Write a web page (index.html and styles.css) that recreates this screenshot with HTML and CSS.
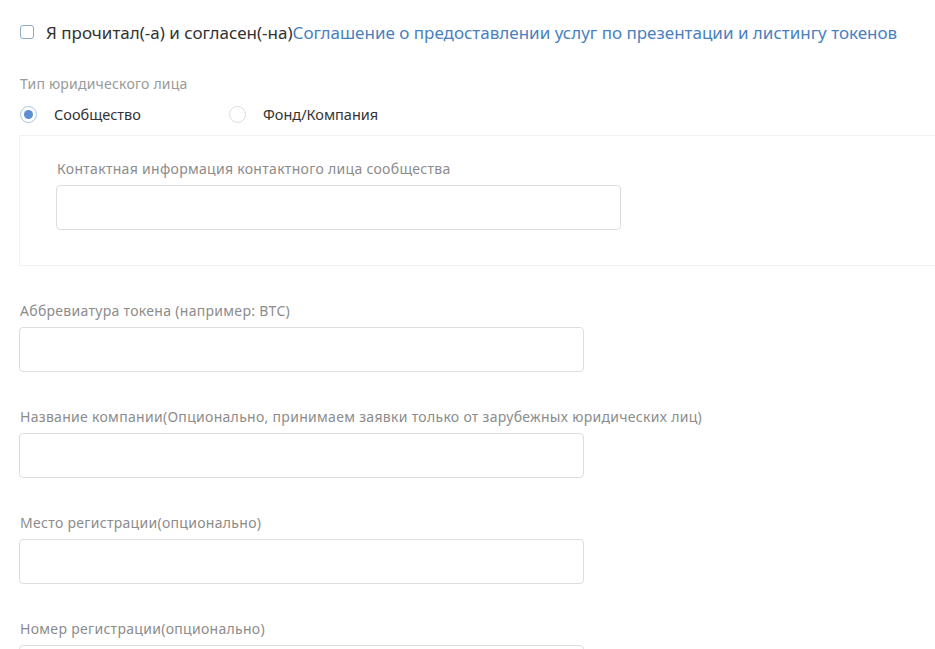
FILE: index.html
```html
<!DOCTYPE html>
<html lang="ru">
<head>
<meta charset="utf-8">
<link rel="stylesheet" href="styles.css">
</head>
<body>
<div class="page">
  <div class="agree">
    <span class="checkbox"></span>
    <span class="agree-text">Я прочитал(-а) и согласен(-на)<a class="link">Соглашение о предоставлении услуг по презентации и листингу токенов</a></span>
  </div>

  <div class="type-label">Тип юридического лица</div>
  <div class="radios">
    <div class="radio-item">
      <span class="radio checked"></span>
      <span class="radio-text">Сообщество</span>
    </div>
    <div class="radio-item">
      <span class="radio"></span>
      <span class="radio-text">Фонд/Компания</span>
    </div>
  </div>

  <div class="panel">
    <div class="field inner">
      <div class="label">Контактная информация контактного лица сообщества</div>
      <div class="input"></div>
    </div>
  </div>

  <div class="field">
    <div class="label">Аббревиатура токена (например: BTC)</div>
    <div class="input"></div>
  </div>
  <div class="field">
    <div class="label">Название компании(Опционально, принимаем заявки только от зарубежных юридических лиц)</div>
    <div class="input"></div>
  </div>
  <div class="field">
    <div class="label">Место регистрации(опционально)</div>
    <div class="input"></div>
  </div>
  <div class="field">
    <div class="label">Номер регистрации(опционально)</div>
    <div class="input"></div>
  </div>
</div>
</body>
</html>
```

FILE: styles.css
```css
html, body {
  margin: 0;
  padding: 0;
  background: #ffffff;
  overflow: hidden;
}
body {
  font-family: "Noto Sans", "Open Sans", "Liberation Sans", sans-serif;
  color: #333333;
}
.page {
  padding: 20px 0 0 20px;
  width: 915px;
}
.agree {
  display: flex;
  align-items: center;
  gap: 12px;
  height: 24px;
}
.checkbox {
  width: 14px;
  height: 14px;
  border: 1.5px solid #8ea9cf;
  border-radius: 3px;
  box-sizing: border-box;
  flex: none;
}
.agree-text {
  font-size: 17px;
  color: #333333;
  white-space: nowrap;
}
.link {
  color: #4a7fc0;
}
.type-label {
  margin-top: 31px;
  font-size: 14px;
  letter-spacing: 0.2px;
  color: #999999;
  line-height: 18px;
}
.radios {
  display: flex;
  margin-top: 11px;
  height: 20px;
  align-items: center;
}
.radio-item {
  display: flex;
  align-items: center;
  gap: 17px;
  width: 209px;
}
.radio {
  width: 17px;
  height: 17px;
  border: 1.2px solid #dcdcdc;
  border-radius: 50%;
  box-sizing: border-box;
  flex: none;
  display: flex;
  align-items: center;
  justify-content: center;
}
.radio.checked {
  border-color: #a9c3e6;
  border-width: 1.5px;
}
.radio.checked::after {
  content: "";
  width: 9px;
  height: 9px;
  border-radius: 50%;
  background: #5b8fd1;
}
.radio-text {
  font-size: 14.5px;
  color: #333333;
}
.panel {
  margin-top: 11px;
  margin-left: -1px;
  border: 1px solid #f2f2f2;
  border-right: none;
  height: 131px;
  box-sizing: border-box;
  padding: 24px 0 0 37px;
  margin-bottom: 36px;
}
.field {
  margin-bottom: 36px;
}
.field.inner {
  margin-bottom: 0;
}
.label {
  font-size: 14px;
  letter-spacing: 0.3px;
  color: #8c8c8c;
  line-height: 18px;
  height: 18px;
  margin-bottom: 7px;
  white-space: nowrap;
}
.input {
  width: 565px;
  height: 45px;
  border: 1px solid #dedede;
  border-radius: 4px;
  box-sizing: border-box;
  margin-left: -1px;
  background: #ffffff;
}
```
